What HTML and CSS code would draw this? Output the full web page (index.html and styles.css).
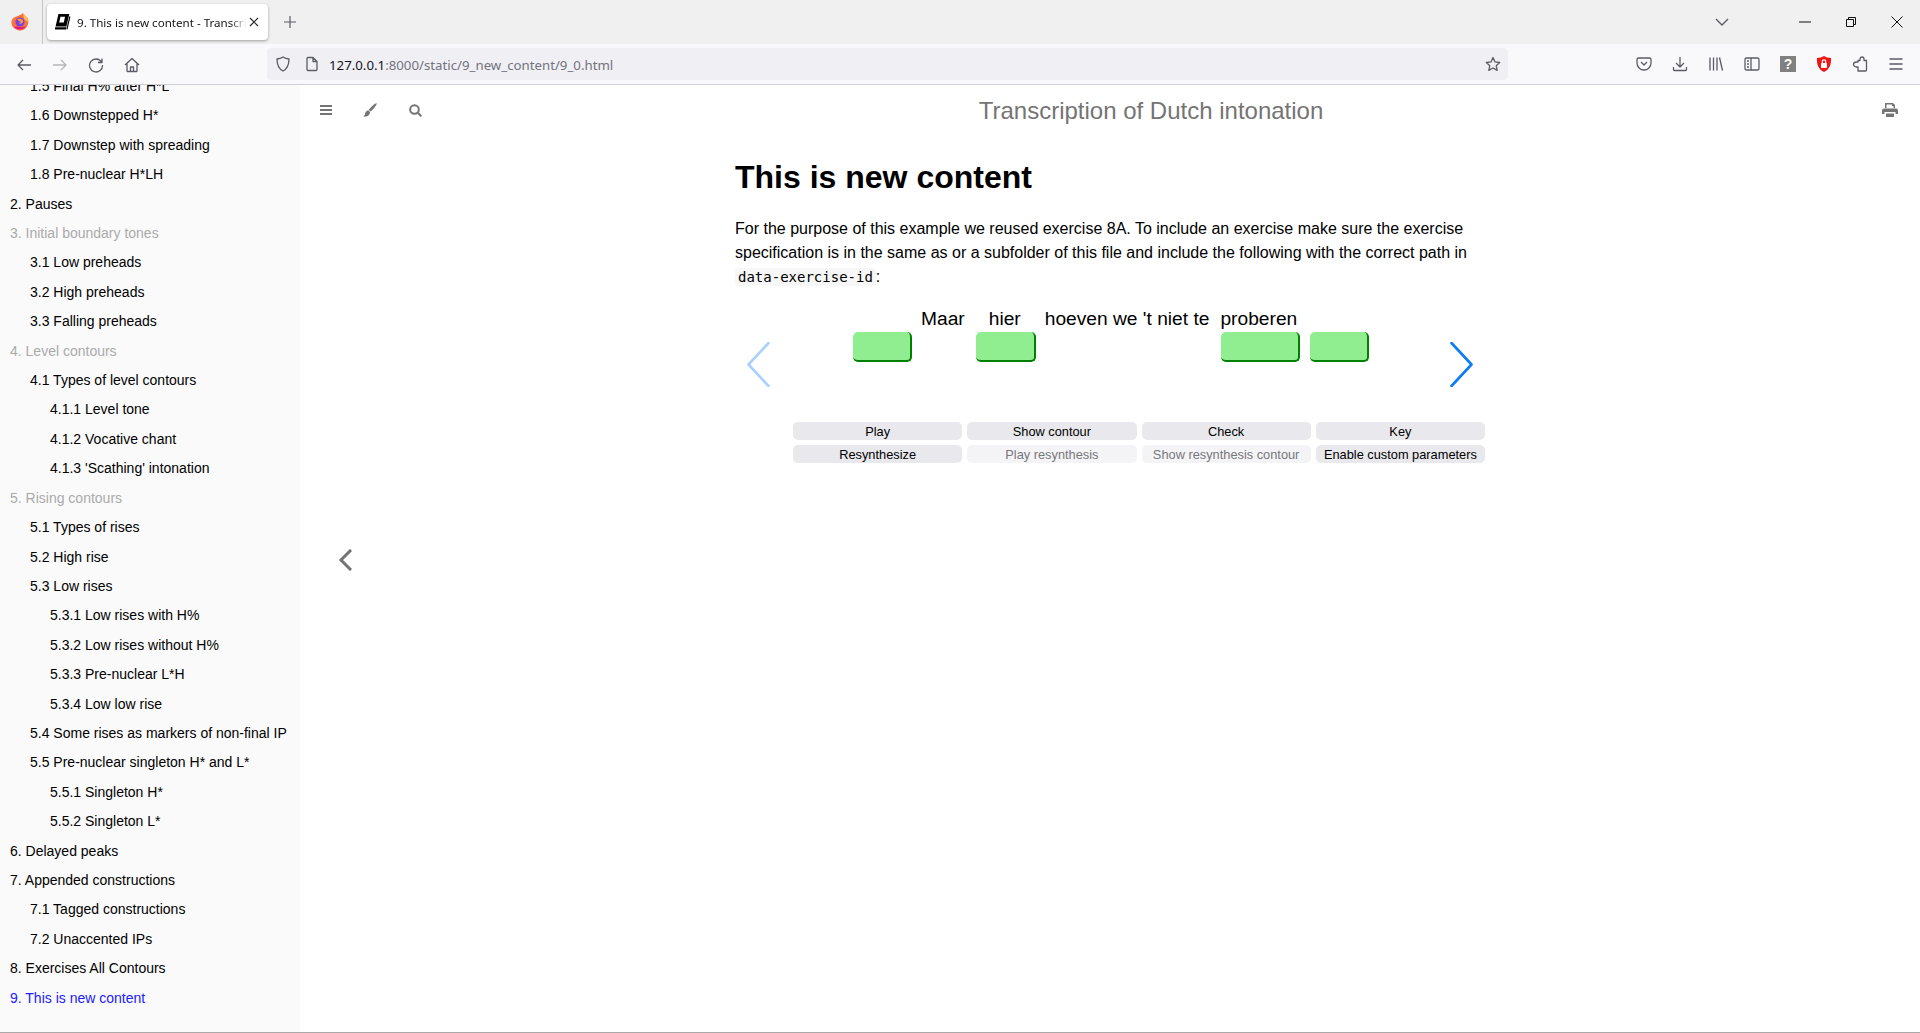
FILE: index.html
```html
<!DOCTYPE html>
<html lang="en">

<head>
    <meta charset="utf-8">
    <title>9. This is new content - Transcription of Dutch intonation</title>
    <link rel="stylesheet" href="styles.css">
</head>

<body>
    <!-- Browser tab strip -->
    <div class="tabbar">
        <svg class="ff-logo" width="20" height="20" viewBox="0 0 20 20">
            <path d="M13 1c1 2 3 3 4.500 5 1.500 3 1 6-.5 8.500-2 3.500-6 5-9.500 3.500C3 16.500 1 13 1.500 9.500 2 7 3.500 5.500 5 5c2-1 5-1 8-4z" fill="#ff7139"/>
            <path d="M13 1c1 2 3 3 4.500 5l.5 4-4-3z" fill="#ffbd4f"/>
            <path d="M4 15c3 3.500 9 3.500 12-1-2 1-4 1.500-6 1s-4-1-6 0z" fill="#e31587"/>
            <circle cx="10" cy="10" r="4.500" fill="#7542e5"/>
            <path d="M7 7.500c2-1.500 5-1 6 1 .5 1.500-.5 3-2 3.200-1 .1-2-.4-2.400-1.200 1 .3 2 .2 2.400-.5-1-.6-2.500-.8-4-2.500z" fill="#ff9640"/>
        </svg>
        <div class="tab-sep"></div>
        <div class="tab">
            <svg class="tab-icon" width="16" height="16" viewBox="1 1 14 14">
                <path d="M4 1h9.500L11 12H1.500z" fill="#000"/>
                <path d="M1.500 12.500h9.500l-.4 2H2a1 1 0 0 1-.5-2z" fill="#000"/>
                <path d="M13.500 3l1 .3-2.600 11.200-.9-.3z" fill="#000"/>
                <rect x="5.500" y="3.500" width="4" height="5" fill="#fff" transform="skewX(-12) translate(1 0)"/>
            </svg>
            <span class="tab-title">9. This is new content - Transcription of Dutch intonation</span>
            <svg class="tab-close" width="12" height="12" viewBox="0 0 12 12"><path d="M2 2l8 8M10 2l-8 8"/></svg>
        </div>
        <svg class="new-tab" width="14" height="14" viewBox="0 0 14 14"><path d="M7 1v12M1 7h12"/></svg>
        <div class="tabbar-fill"></div>
        <svg class="tab-list" width="14" height="8" viewBox="0 0 14 8"><path d="M1 1l6 6 6-6"/></svg>
        <div class="caption">
            <svg width="12" height="12" viewBox="0 0 12 12"><path d="M0 6h12"/></svg>
            <svg width="12" height="12" viewBox="0 0 12 12"><path d="M1.500 3.500h7v7h-7zM3.500 3.500v-2h7v7h-2"/></svg>
            <svg width="12" height="12" viewBox="0 0 12 12"><path d="M.5 .5l11 11M11.500 .5l-11 11"/></svg>
        </div>
    </div>

    <!-- Navigation toolbar -->
    <div class="toolbar">
        <div class="nav-icons">
            <svg class="tool" viewBox="0 0 16 16"><path d="M15 8H2M7 3L2 8l5 5"/></svg>
            <svg class="tool off" viewBox="0 0 16 16"><path d="M1 8h13M9 3l5 5-5 5"/></svg>
            <svg class="tool" viewBox="0 0 16 16"><path d="M13.500 5A6.500 6.500 0 1 0 14.500 8M14 1.500V5.500H10"/></svg>
            <svg class="tool" viewBox="0 0 16 16"><path d="M1 8l7-6.500L15 8M3 6.500V14a.5.5 0 0 0 .5.5h9a.5.5 0 0 0 .5-.5V6.500M6.500 14.500V10h3v4.500"/></svg>
        </div>
        <div class="urlbar">
            <svg class="tool" viewBox="0 0 16 16"><path d="M8 1c2 1.300 4 1.800 6 2 0 5-1 9.500-6 12C3 12.500 2 8 2 3c2-.2 4-.7 6-2z"/></svg>
            <svg class="tool page-icon" viewBox="0 0 16 16"><path d="M3 2.500a1 1 0 0 1 1-1h5l4 4v8a1 1 0 0 1-1 1H4a1 1 0 0 1-1-1zM9 1.500v4h4"/></svg>
            <span class="url"><span class="url-host">127.0.0.1</span>:8000/static/9_new_content/9_0.html</span>
            <svg class="tool star" viewBox="0 0 16 16"><path d="M8 1.500l2 4.400 4.700.6-3.500 3.200 1 4.700L8 12l-4.200 2.400 1-4.700L1.300 6.500 6 5.900z"/></svg>
        </div>
        <div class="addons">
            <svg class="tool" viewBox="0 0 16 16"><path d="M2.500 2h11A1.500 1.500 0 0 1 15 3.500V7A7 7 0 0 1 1 7V3.500A1.500 1.500 0 0 1 2.500 2zM5 6l3 3 3-3"/></svg>
            <svg class="tool" viewBox="0 0 16 16"><path d="M8 1v10M4 7l4 4 4-4M1.500 11v2.500a1 1 0 0 0 1 1h11a1 1 0 0 0 1-1V11"/></svg>
            <svg class="tool" viewBox="0 0 16 16"><path d="M2 1.500v13M5.500 1.500v13M9 1.500v13M11.500 1.500l3 13"/></svg>
            <svg class="tool" viewBox="0 0 16 16"><path d="M2.500 2h11A1.500 1.500 0 0 1 15 3.500v9a1.500 1.500 0 0 1-1.500 1.500h-11A1.500 1.500 0 0 1 1 12.500v-9A1.500 1.500 0 0 1 2.500 2zM7 2v12M3 5h2M3 8h2M3 11h2"/></svg>
            <div class="help-box">?</div>
            <svg class="addon-shield" width="16" height="16" viewBox="0 0 16 16">
                <path d="M8 0c2 1.300 4 1.800 7 2 .3 6-1 11-7 14C2 13 .7 8 1 2c3-.2 5-.7 7-2z" fill="#f01414"/>
                <rect x="5" y="7" width="6" height="5" rx=".8" fill="#fff"/>
                <path d="M6.300 7V5.500a1.700 1.700 0 0 1 3.400 0V7" fill="none" stroke="#fff" stroke-width="1.200"/>
            </svg>
            <svg class="tool" viewBox="0 0 16 16"><path d="M6 15V11H4.500C3 11 1.500 10 1.500 8.500S3 6 4.500 6H6V4.500h2V3c0-1.300 1-2 2-2s2 .7 2 2v1.500h2.500V14a1 1 0 0 1-1 1z"/></svg>
            <svg class="tool" viewBox="0 0 16 16"><path d="M1.500 3h13M1.500 8h13M1.500 13h13"/></svg>
        </div>
    </div>

    <div class="page">
        <!-- Chapter list -->
        <nav class="sidebar">
            <div class="chapters">
                <a class="ch l2">1.5 Final H% after H*L</a>
                <a class="ch l2">1.6 Downstepped H*</a>
                <a class="ch l2">1.7 Downstep with spreading</a>
                <a class="ch l2">1.8 Pre-nuclear H*LH</a>
                <a class="ch">2. Pauses</a>
                <a class="ch muted">3. Initial boundary tones</a>
                <a class="ch l2">3.1 Low preheads</a>
                <a class="ch l2">3.2 High preheads</a>
                <a class="ch l2">3.3 Falling preheads</a>
                <a class="ch muted">4. Level contours</a>
                <a class="ch l2">4.1 Types of level contours</a>
                <a class="ch l3">4.1.1 Level tone</a>
                <a class="ch l3">4.1.2 Vocative chant</a>
                <a class="ch l3">4.1.3 'Scathing' intonation</a>
                <a class="ch muted">5. Rising contours</a>
                <a class="ch l2">5.1 Types of rises</a>
                <a class="ch l2">5.2 High rise</a>
                <a class="ch l2">5.3 Low rises</a>
                <a class="ch l3">5.3.1 Low rises with H%</a>
                <a class="ch l3">5.3.2 Low rises without H%</a>
                <a class="ch l3">5.3.3 Pre-nuclear L*H</a>
                <a class="ch l3">5.3.4 Low low rise</a>
                <a class="ch l2">5.4 Some rises as markers of non-final IP</a>
                <a class="ch l2">5.5 Pre-nuclear singleton H* and L*</a>
                <a class="ch l3">5.5.1 Singleton H*</a>
                <a class="ch l3">5.5.2 Singleton L*</a>
                <a class="ch">6. Delayed peaks</a>
                <a class="ch">7. Appended constructions</a>
                <a class="ch l2">7.1 Tagged constructions</a>
                <a class="ch l2">7.2 Unaccented IPs</a>
                <a class="ch">8. Exercises All Contours</a>
                <a class="ch active">9. This is new content</a>
            </div>
        </nav>

        <div class="wrapper">
            <div class="menubar">
                <div class="left-buttons">
                    <svg class="menu-icon" width="12" height="10" viewBox="0 0 12 10"><path d="M0 0h12v2H0zM0 4h12v2H0zM0 8h12v2H0z"/></svg>
                    <svg class="menu-icon" width="14" height="14" viewBox="0 0 14 14"><path d="M13.500 .3c.3.2.2.700 0 1.100C12 4 9.500 7 7.500 8.500L5.700 6.800C7.500 4.500 11 1 13 .2c.2-.1.400-.1.500.1zM5.200 7.300l1.800 1.700C7 11 6 13 3.500 13.500 2 13.800 1 13.500 0 13c1 0 1.700-.5 2-2 .3-2 1.700-3.500 3.200-3.700z"/></svg>
                    <svg class="menu-icon search-icon" width="13" height="13" viewBox="0 0 13 13"><circle cx="5.500" cy="5.500" r="4.300"/><path d="M8.800 8.800L12.300 12.300"/></svg>
                </div>
                <h1 class="menu-title">Transcription of Dutch intonation</h1>
                <div class="right-buttons">
                    <svg class="menu-icon" width="16" height="14" viewBox="0 0 16 14"><path d="M3 0h8l2 2v3h-1.500V3H10V1.500H4.500V5H3zM2 5.500h12a2 2 0 0 1 2 2V11h-2.500V9h-11v2H0V7.500a2 2 0 0 1 2-2zM4 10.500h8V14H4z"/></svg>
                </div>
            </div>

            <div class="content-row">
                <div class="back-col">
                    <svg class="back-arrow" width="14" height="22" viewBox="0 0 14 22"><path d="M12 2L3 11l9 9"/></svg>
                </div>
                <main class="content">
                    <h1 class="page-title">This is new content</h1>
                    <p class="intro">For the purpose of this example we reused exercise 8A. To include an exercise make sure the exercise specification is in the same as or a subfolder of this file and include the following with the correct path in <code>data-exercise-id</code>:</p>

                    <!-- Exercise -->
                    <div class="exercise">
                        <svg class="arrow arrow-prev" width="23" height="45" viewBox="0 0 23 45"><path d="M21.500 1L1.500 22.500 21.500 44"/></svg>
                        <div class="stage">
                            <div class="words">
                                <span class="word w-maar">Maar</span>
                                <span class="word w-hier">hier</span>
                                <span class="word w-rest">hoeven we 't niet te</span>
                                <span class="word w-pro">proberen</span>
                            </div>
                            <div class="slots">
                                <div class="slot s1"></div>
                                <div class="slot s2"></div>
                                <div class="slot s3"></div>
                                <div class="slot s4"></div>
                            </div>
                        </div>
                        <svg class="arrow arrow-next" width="23" height="45" viewBox="0 0 23 45"><path d="M1.500 1l20 21.500L1.500 44"/></svg>
                    </div>

                    <div class="controls">
                        <button>Play</button>
                        <button>Show contour</button>
                        <button>Check</button>
                        <button>Key</button>
                        <button>Resynthesize</button>
                        <button disabled>Play resynthesis</button>
                        <button disabled>Show resynthesis contour</button>
                        <button>Enable custom parameters</button>
                    </div>
                </main>
            </div>
        </div>
    </div>
</body>

</html>
```

FILE: styles.css
```css
/* Base */
html,
body {
    height: 100%;
}

body {
    margin: 0;
    display: flex;
    flex-direction: column;
    overflow: hidden;
    background-color: #ffffff;
    font-family: "Liberation Sans", Arial, sans-serif;
    color: #000000;
}

/* Tab strip */
.tabbar {
    height: 44px;
    flex: none;
    display: flex;
    align-items: center;
    background-color: #f0f0f0;
}

.ff-logo {
    margin-left: 10px;
}

.tab-sep {
    width: 1px;
    height: 44px;
    margin-left: 12px;
    background-color: #c4c4c4;
}

.tab {
    width: 221px;
    height: 36px;
    margin-left: 4px;
    padding-left: 8px;
    box-sizing: border-box;
    display: flex;
    align-items: center;
    background-color: #ffffff;
    border-radius: 4px;
    box-shadow: 0 1px 3px rgba(0, 0, 0, 0.35);
}

.tab-icon {
    flex: none;
}

.tab-title {
    width: 170px;
    margin-left: 6px;
    overflow: hidden;
    white-space: nowrap;
    font-family: "Noto Sans", sans-serif;
    font-size: 11.6px;
    color: #15141a;
    -webkit-mask-image: linear-gradient(to right, #000 90%, transparent);
    mask-image: linear-gradient(to right, #000 90%, transparent);
}

.tab-close {
    margin-left: 1px;
    flex: none;
}

.tab-close path,
.new-tab path,
.tab-list path,
.caption path {
    fill: none;
    stroke: #2b2a33;
    stroke-width: 1.2;
}

.new-tab {
    margin-left: 15px;
}

.new-tab path {
    stroke: #5b5b66;
}

.tabbar-fill {
    flex: 1;
}

.tab-list path {
    stroke: #5b5b66;
    stroke-width: 1.4;
}

.caption {
    margin-left: 70px;
    margin-right: 17px;
    display: flex;
    gap: 34px;
}

.caption path {
    stroke: #111111;
    stroke-width: 1;
}

/* Toolbar */
.toolbar {
    height: 40px;
    flex: none;
    display: flex;
    align-items: center;
    background-color: #f9f9fb;
    border-bottom: 1px solid #cfcfd8;
}

.tool {
    width: 16px;
    height: 16px;
    flex: none;
    fill: none;
    stroke: #5b5b66;
    stroke-width: 1.3;
    stroke-linejoin: round;
}

.nav-icons {
    width: 267px;
    flex: none;
    padding: 2px 0 0 16px;
    box-sizing: border-box;
    display: flex;
    gap: 20px;
}

.off {
    stroke: #b5b5bc;
}

.urlbar {
    width: 1241px;
    height: 32px;
    flex: none;
    padding: 0 7px 0 8px;
    box-sizing: border-box;
    display: flex;
    align-items: center;
    background-color: #f0f0f4;
    border-radius: 4px;
}

.page-icon {
    margin-left: 13px;
}

.url {
    flex: 1;
    margin-left: 9px;
    padding-top: 1px;
    font-family: "Noto Sans", sans-serif;
    font-size: 13.25px;
    color: #73737d;
}

.url-host {
    color: #15141a;
}

.addons {
    flex: 1;
    padding-left: 128px;
    display: flex;
    align-items: center;
    gap: 20px;
}

.help-box {
    width: 16px;
    height: 16px;
    background-color: #808080;
    color: #ffffff;
    font-size: 14px;
    font-weight: 700;
    line-height: 16px;
    text-align: center;
}

.addon-shield {
    flex: none;
}

/* Page */
.page {
    flex: 1;
    min-height: 0;
    display: flex;
    border-bottom: 1px solid #a9a9a9;
}

.sidebar {
    width: 300px;
    flex: none;
    overflow: hidden;
    background-color: #fafafa;
}

.chapters {
    margin-top: -13px;
    display: flex;
    flex-direction: column;
}

.ch {
    padding-left: 10px;
    font-size: 14px;
    line-height: 29.4px;
    white-space: nowrap;
}

.l2 {
    padding-left: 30px;
}

.l3 {
    padding-left: 50px;
}

.muted {
    color: #aaaaaa;
}

.active {
    color: #2020ff;
}

.wrapper {
    flex: 1;
    display: flex;
    flex-direction: column;
}

/* Menu bar */
.menubar {
    height: 50px;
    flex: none;
    display: flex;
    align-items: center;
}

.left-buttons {
    width: 130px;
    padding-left: 20px;
    box-sizing: border-box;
    display: flex;
    align-items: center;
    gap: 31px;
}

.menu-icon {
    flex: none;
    fill: #747474;
}

.search-icon {
    margin-left: 1px;
    fill: none;
    stroke: #747474;
    stroke-width: 2;
}

.menu-title {
    flex: 1;
    margin: 0;
    padding-top: 2px;
    text-align: center;
    font-size: 24px;
    font-weight: 400;
    color: #747474;
}

.right-buttons {
    width: 48px;
    padding-left: 10px;
    box-sizing: border-box;
    display: flex;
}

/* Content */
.content-row {
    flex: 1;
    display: flex;
    position: relative;
}

.back-col {
    position: absolute;
    left: 38px;
    top: 414px;
}

.back-arrow {
    fill: none;
    stroke: #747474;
    stroke-width: 3;
    stroke-linecap: square;
}

.content {
    width: 750px;
    margin: 0 auto;
}

.page-title {
    margin: 24px 0 0;
    font-size: 32px;
    line-height: 36px;
}

.intro {
    margin: 22px 0 0;
    font-size: 16px;
    line-height: 24px;
}

code {
    padding: 1px 3px;
    background-color: #f6f7f6;
    border-radius: 3px;
    font-family: "DejaVu Sans Mono", monospace;
    font-size: 14px;
}

/* Exercise */
.exercise {
    margin-top: 16px;
    display: flex;
    align-items: flex-start;
}

.arrow {
    flex: none;
    margin-top: 37px;
    fill: none;
    stroke-width: 2.6;
    stroke-linecap: round;
    stroke-linejoin: round;
}

.arrow-prev {
    margin-left: 12px;
    stroke: #a8d1ff;
}

.arrow-next {
    stroke: #0a7cf5;
}

.stage {
    width: 680px;
}

.words {
    display: flex;
    font-size: 19.2px;
    line-height: 27px;
    white-space: nowrap;
}

.word {
    flex: none;
}

.w-maar {
    margin-left: 151px;
}

.w-hier {
    margin-left: 24px;
}

.w-rest {
    margin-left: 24px;
}

.w-pro {
    margin-left: 11px;
}

.slots {
    display: flex;
}

.slot {
    height: 30px;
    box-sizing: border-box;
    background-color: #90ee90;
    border-right: 2px solid #008000;
    border-bottom: 2px solid #008000;
    border-radius: 5px;
}

.s1 {
    width: 59px;
    margin-left: 83px;
}

.s2 {
    width: 60px;
    margin-left: 64px;
}

.s3 {
    width: 79px;
    margin-left: 185px;
}

.s4 {
    width: 59px;
    margin-left: 10px;
}

.controls {
    margin: 35px 0 0 58px;
    display: grid;
    grid-template-columns: repeat(4, 1fr);
    gap: 5px;
}

.controls button {
    height: 18px;
    padding: 0;
    border: none;
    border-radius: 5px;
    background-color: #e9e9ed;
    font-family: "Liberation Sans", Arial, sans-serif;
    font-size: 12.8px;
    color: #000000;
}

.controls button:disabled {
    background-color: #f4f4f6;
    color: #77777c;
}
```
